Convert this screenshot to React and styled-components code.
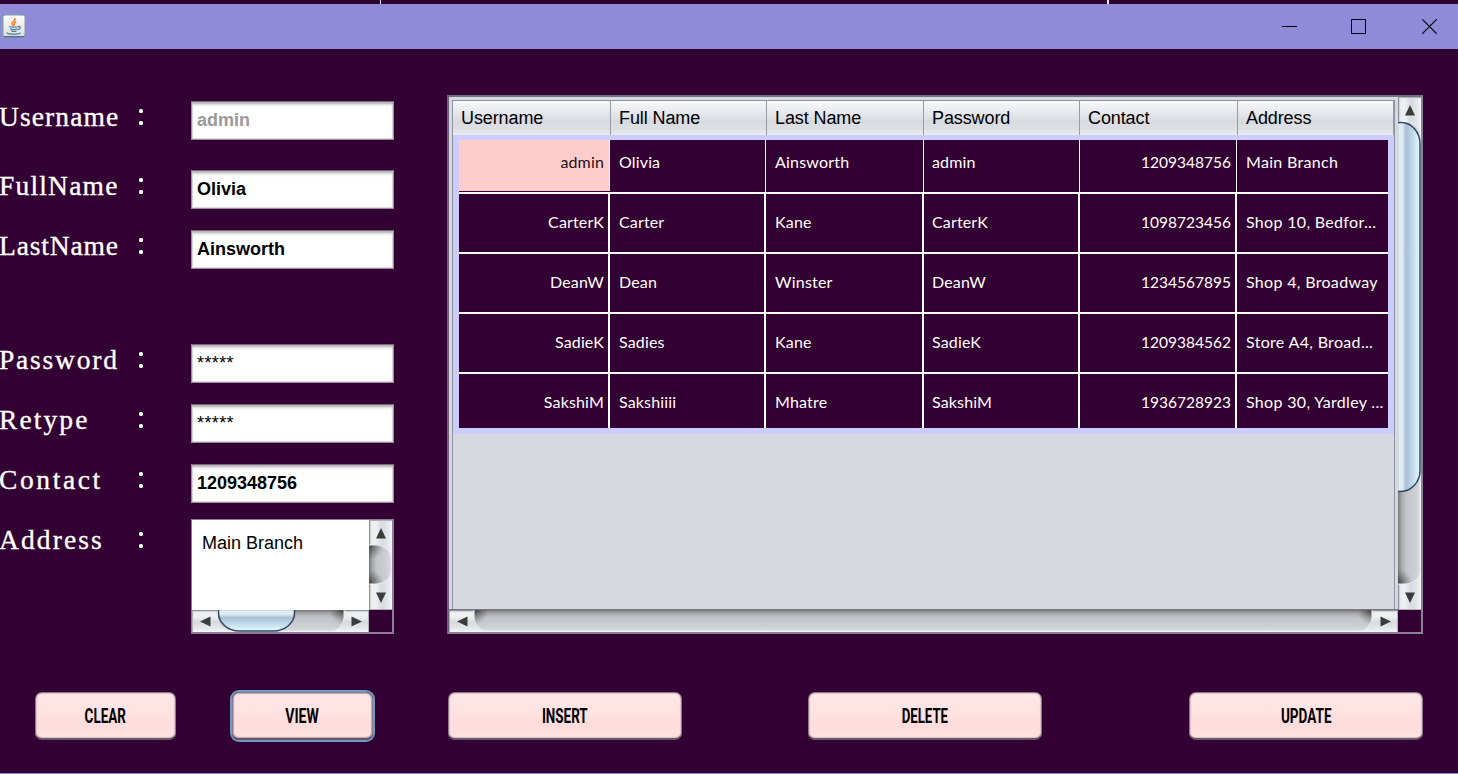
import React from "react";
import styled, { createGlobalStyle } from "styled-components";

const BG = "#330033";
const PANEL = "#d6d9e0";

const GlobalStyle = createGlobalStyle`
  * { box-sizing: border-box; }
  body { margin: 0; background: ${BG}; overflow: hidden; }
`;

const Window = styled.div`
  width: 1458px;
  height: 774px;
  display: flex;
  flex-direction: column;
  background: ${BG};
  border-bottom: 1px solid #8f8bd8;
  font-family: "Liberation Sans", Arial, sans-serif;
  overflow: hidden;
`;

const TopStrip = styled.div`
  height: 4px;
  flex: none;
  display: flex;
  padding-left: 380px;
  gap: 726px;
  background: #2b002d;
`;

const Tick = styled.div`
  width: ${(p) => p.$w}px;
  background: #e8e4ee;
`;

const TitleBar = styled.div`
  height: 45px;
  flex: none;
  display: flex;
  align-items: center;
  justify-content: space-between;
  padding: 0 21px 0 2px;
  background: #8f8bd8;
`;

const Controls = styled.div`
  display: flex;
  gap: 54px;
  svg { display: block; }
  svg:last-child { margin-left: 2px; }
`;

const IconSlot = styled.div`
  height: 26px;
  svg { display: block; }
`;

const Main = styled.div`
  display: flex;
  height: 593px;
  padding-top: 46px;
`;

const Form = styled.div`
  width: 447px;
  padding-top: 6px;
`;

const FormRow = styled.div`
  display: flex;
  height: ${(p) => p.$h}px;
`;

const Label = styled.div`
  width: 134px;
  padding-top: ${(p) => p.$top || 0}px;
  margin-left: -1px;
  font: 27.5px/32px "Liberation Serif", "Times New Roman", serif;
  letter-spacing: ${(p) => p.$ls}px;
  -webkit-text-stroke: 0.35px #fff;
  color: #fff;
  white-space: nowrap;
`;

const Colon = styled.div`
  width: 58px;
  padding: ${(p) => 8 + (p.$top || 0)}px 0 0 6px;
  display: flex;
  flex-direction: column;
  gap: 8px;
  &::before, &::after {
    content: "";
    width: 4px;
    height: 4px;
    border-radius: 1.5px;
    background: #fff;
  }
`;

const Field = styled.div`
  width: 203px;
  height: 39px;
  padding-left: 5px;
  border: 1px solid #9a8c9c;
  border-top-color: #77697a;
  background: #fff;
  box-shadow: inset 0 2px 2px #b5b5b5, inset 0 4px 3px #eee, inset 0 0 0 1px #dcdcdc;
  font-size: 18px;
  font-weight: ${(p) => (p.$plain ? 400 : 700)};
  line-height: 36px;
  letter-spacing: ${(p) => (p.$plain ? 0.4 : 0)}px;
  color: ${(p) => (p.$muted ? "#999" : "#000")};
`;

const TextArea = styled.div`
  width: 203px;
  height: 115px;
  border: 1px solid #8d7f96;
  border-right-width: 2px;
  border-bottom-width: 2px;
  display: grid;
  grid-template-columns: 177px 23px;
  grid-template-rows: 90px 22px;
  svg { display: block; }
`;

const AreaText = styled.div`
  padding: 12px 0 0 10px;
  font-size: 18px;
  line-height: 22px;
  color: #000;
  background: #fff;
`;

const Pane = styled.div`
  width: 976px;
  height: 539px;
  border: 2px solid #8a8296;
  border-left-color: #6d6079;
  border-top-color: #77707f;
  display: grid;
  grid-template-columns: 949px 23px;
  grid-template-rows: 513px 22px;
  svg { display: block; }
`;

const Viewport = styled.div`
  background: ${PANEL};
  border-bottom: 1px solid #777a82;
  padding: 3px 3px 0 3px;
`;

const TableBox = styled.div`
  height: 509px;
  border: 1px solid #8e949f;
  border-bottom: 0;
`;

const COLS = "158px 156px 157px 156px 158px 156px";

const HeaderRow = styled.div`
  display: grid;
  grid-template-columns: ${COLS};
  height: 33px;
  border-bottom: 1px solid #9da1aa;
`;

const HeaderCell = styled.div`
  padding-left: 8px;
  border-right: 1px solid #979ba3;
  background: linear-gradient(#f7f8fa 0%, #e6e8ec 35%, #d7dade 60%, #dcdfe3 80%, #e9ebee 100%);
  font-size: 18px;
  line-height: 34px;
  letter-spacing: -0.1px;
  color: #000;
`;

const Grid = styled.div`
  border: 6px solid #ccccff;
  background: ${BG};
  height: 300px;
`;

const Row = styled.div`
  display: grid;
  grid-template-columns: 151px 156px 158px 156px 157px 151px;
  height: ${(p) => p.$h}px;
  border-bottom: ${(p) => (p.$last ? 0 : 2)}px solid #fff;
`;

const Cell = styled.div`
  padding: ${(p) => p.$pt}px ${(p) => (p.$right ? (p.$thin ? 5 : 4) : 0)}px 0 ${(p) => (p.$right ? 0 : p.$left)}px;
  text-align: ${(p) => (p.$right ? "right" : "left")};
  font: ${(p) => (p.$digits ? 15.5 : 16)}px/20px Lato, Carlito, sans-serif;
  white-space: nowrap;
  letter-spacing: ${(p) => p.$ls}px;
  color: ${(p) => (p.$selected ? "#221018" : "#fff")};
  background: ${(p) => (p.$selected ? "#ffcccc" : "transparent")};
  margin-bottom: ${(p) => (p.$selected ? 1 : 0)}px;
  border-right: ${(p) => (p.$end ? 0 : p.$thin ? 1 : 2)}px solid #fff;
`;

const ButtonBar = styled.div`
  display: flex;
  padding: 50px 0 0 35px;
`;

const Button = styled.div`
  width: ${(p) => p.$w}px;
  height: 48px;
  margin-left: ${(p) => p.$ml || 0}px;
  display: flex;
  align-items: center;
  justify-content: center;
  border: 1px solid #8c7b88;
  border-bottom: 2px solid #6d5868;
  border-radius: 7px;
  background: linear-gradient(#ffe8e8 0%, #ffe1e1 45%, #ffdcdc 70%, #ffe2e2 100%);
  box-shadow: ${(p) =>
    p.$focus ? "0 0 0 2px #6b9bc6, inset 0 0 1px 1px #b9a5aa" : "inset 0 0 1px 1px #dcc4c6"};
  font: 700 21px/24px Roboto, sans-serif;
  color: #000;
`;

const Caption = styled.span`
  padding-top: 1px;
  transform: scaleX(${(p) => p.$sx});
  white-space: nowrap;
`;

function JavaIcon() {
  return (
    <svg width="24" height="24" viewBox="0 0 24 24">
      <defs>
        <linearGradient id="jbg" x1="0" y1="0" x2="0" y2="1">
          <stop offset="0" stopColor="#fff" />
          <stop offset="1" stopColor="#dcdcdc" />
        </linearGradient>
      </defs>
      <rect x=".8" y=".8" width="22.4" height="22" rx="2.2" fill="url(#jbg)" stroke="#7898ad" strokeWidth="1.3" />
      <path d="M2 22.700h20" stroke="#44627c" />
      <path d="M13 4c1 3-4 3.500-2.800 6.200.3.800 1 1.100 1.300 1.700M14.300 7.500c-3 1.200-1.500 2.400-2.300 4" fill="none" stroke="#ef8432" strokeWidth="1.600" />
      <path d="M7 12.500c2 1 7 .8 9.500 0M8 14.900c2 .8 5.500.8 7.500 0M9 17c2 .6 4 .6 5.500 0M16.300 12.600c3-.8 2.300 2.400-.4 3M5.500 18.600c-1.500 1.200 3 1.500 6 1.500 3.500 0 7-.3 6.500-1.600" fill="none" stroke="#527da0" strokeWidth="1.300" />
    </svg>
  );
}

/* Runs top to bottom; the horizontal bar is the same drawing with its axes swapped. */
function ScrollBar({ id, length, breadth, start, end, thumb, horizontal }) {
  const b = breadth;
  const capsule = (a, z, x, k) => {
    const cx = x + (b - 1 - x) * 0.55;
    const cy = k * 0.45;
    return `M-1 ${a}H${x}C${cx} ${a} ${b - 1} ${a + cy} ${b - 1} ${a + k}V${z - k}C${b - 1} ${z - cy} ${cx} ${z} ${x} ${z}H-1Z`;
  };
  const [w, h] = horizontal ? [length, b] : [b, length];
  const stops = (list) => list.map(([o, c]) => <stop key={o} offset={o} stopColor={c} />);
  return (
    <svg width={w} height={h} viewBox={`0 0 ${w} ${h}`}>
      <defs>
        <linearGradient id={id + "b"}>
          {stops([[0, "#b4b6ba"], [0.12, "#eceef0"], [0.3, "#eef0f2"], [0.55, "#d7dade"], [0.85, "#e6e9eb"], [1, "#f6f7f8"]])}
        </linearGradient>
        <linearGradient id={id + "t"}>
          {stops([[0, "#77787c"], [0.15, "#a7a8ac"], [0.35, "#c4c5c9"], [0.7, "#cccdd2"], [1, "#dadbe1"]])}
        </linearGradient>
        <linearGradient id={id + "h"}>
          {stops([[0, "#9db3c6"], [0.1, "#e6edf2"], [0.25, "#dde8f1"], [0.38, "#a9bfd3"], [0.65, "#bfd7ea"], [1, "#e6fbff"]])}
        </linearGradient>
        <radialGradient id={id + "s"} gradientUnits="userSpaceOnUse" cx="0" cy={start} r="15">
          <stop offset="0" stopColor="#2b2b2b" stopOpacity=".8" />
          <stop offset="1" stopColor="#555" stopOpacity="0" />
        </radialGradient>
        <radialGradient id={id + "e"} gradientUnits="userSpaceOnUse" cx="0" cy={end} r="15">
          <stop offset="0" stopColor="#2b2b2b" stopOpacity=".8" />
          <stop offset="1" stopColor="#555" stopOpacity="0" />
        </radialGradient>
        <clipPath id={id + "c"}>
          <path d={capsule(start, end, 7, 13)} />
        </clipPath>
      </defs>
      <g transform={horizontal ? "matrix(0 1 1 0 0 0)" : undefined}>
        <rect width={b} height={length} fill={`url(#${id}b)`} />
        <path d={`M0 .5H${b}M0 ${length - 0.5}H${b}`} stroke="#aeb0b4" />
        <path d={`M.5 0V${length}`} stroke="#8d9096" />
        <g clipPath={`url(#${id}c)`}>
          <rect y={start} width={b} height={end - start} fill={`url(#${id}t)`} />
          <rect y={start} width={b} height="16" fill={`url(#${id}s)`} />
          <rect y={end - 16} width={b} height="16" fill={`url(#${id}e)`} />
        </g>
        <path d={capsule(start, end, 7, 13)} fill="none" stroke="#eceef0" />
        {thumb && (
          <path d={capsule(thumb[0] + 0.5, thumb[1] - 0.5, 3, 21)} fill={`url(#${id}h)`} stroke="#2d4860" strokeWidth="1.500" />
        )}
        <path d={`M${b / 2 + 0.500} 8l5 10.500h-10ZM${b / 2 + 0.500} ${length - 7}l5 -10.500h-10Z`} fill="#3c3c3c" />
      </g>
    </svg>
  );
}

const headers = ["Username", "Full Name", "Last Name", "Password", "Contact", "Address"];
const rows = [
  ["admin", "Olivia", "Ainsworth", "admin", "1209348756", "Main Branch"],
  ["CarterK", "Carter", "Kane", "CarterK", "1098723456", "Shop 10, Bedfor..."],
  ["DeanW", "Dean", "Winster", "DeanW", "1234567895", "Shop 4, Broadway"],
  ["SadieK", "Sadies", "Kane", "SadieK", "1209384562", "Store A4, Broad..."],
  ["SakshiM", "Sakshiiii", "Mhatre", "SakshiM", "1936728923", "Shop 30, Yardley ..."],
];
const spacing = [0.15, 0.15, 0.2, 0.15, 0, 0.32];

const fields = [
  { label: "Username", ls: 1.1, h: 69, value: "admin", muted: true },
  { label: "FullName", ls: 1.2, h: 60, value: "Olivia" },
  { label: "LastName", ls: 0.85, h: 114, value: "Ainsworth" },
  { label: "Password", ls: 1.8, h: 60, value: "*****", plain: true },
  { label: "Retype", ls: 2.1, h: 60, value: "*****", plain: true },
  { label: "Contact", ls: 2.6, h: 55, value: "1209348756" },
];

export default function App() {
  return (
    <Window>
      <GlobalStyle />
      <TopStrip>
        <Tick $w={1} />
        <Tick $w={2} />
      </TopStrip>
      <TitleBar>
        <IconSlot><JavaIcon /></IconSlot>
        <Controls>
          <svg width="15" height="15"><path d="M0 7.500h15" stroke="#000" /></svg>
          <svg width="15" height="15"><rect x=".5" y=".5" width="14" height="14" fill="none" stroke="#000" /></svg>
          <svg width="15" height="15"><path d="M.3.3l14.400 14.400M14.700.3L.3 14.700" stroke="#000" strokeWidth="1.150" /></svg>
        </Controls>
      </TitleBar>
      <Main>
        <Form>
          {fields.map((f) => (
            <FormRow key={f.label} $h={f.h}>
              <Label $ls={f.ls}>{f.label}</Label>
              <Colon />
              <Field $muted={f.muted} $plain={f.plain}>{f.value}</Field>
            </FormRow>
          ))}
          <FormRow $h={115}>
            <Label $ls={2.1} $top={5}>Address</Label>
            <Colon $top={5} />
            <TextArea>
              <AreaText>Main Branch</AreaText>
              <ScrollBar id="av" length={90} breadth={23} start={25} end={64} />
              <ScrollBar id="ah" length={177} breadth={22} start={26} end={152} thumb={[26, 103]} horizontal />
            </TextArea>
          </FormRow>
        </Form>
        <Pane>
          <Viewport>
            <TableBox>
              <HeaderRow>
                {headers.map((h) => <HeaderCell key={h}>{h}</HeaderCell>)}
              </HeaderRow>
              <Grid>
                {rows.map((r, i) => (
                  <Row key={r[0]} $h={[54, 60, 60, 60, 54][i]} $last={i === 4}>
                    {r.map((c, j) => (
                      <Cell
                        key={j}
                        $pt={i === 0 ? 12 : 18}
                        $left={j === 3 ? 8 : 9}
                        $ls={spacing[j]}
                        $digits={j === 4}
                        $right={j === 0 || j === 4}
                        $thin={i === 0}
                        $selected={i === 0 && j === 0}
                        $end={j === 5}
                      >
                        {c}
                      </Cell>
                    ))}
                  </Row>
                ))}
              </Grid>
            </TableBox>
          </Viewport>
          <ScrollBar id="tv" length={513} breadth={23} start={25} end={487} thumb={[25, 395]} />
          <ScrollBar id="th" length={949} breadth={22} start={25} end={923} horizontal />
        </Pane>
      </Main>
      <ButtonBar>
        <Button $w={141}><Caption $sx={0.64}>CLEAR</Caption></Button>
        <Button $w={141} $ml={56} $focus><Caption $sx={0.67}>VIEW</Caption></Button>
        <Button $w={234} $ml={75}><Caption $sx={0.64}>INSERT</Caption></Button>
        <Button $w={234} $ml={126}><Caption $sx={0.63}>DELETE</Caption></Button>
        <Button $w={234} $ml={147}><Caption $sx={0.645}>UPDATE</Caption></Button>
      </ButtonBar>
    </Window>
  );
}
